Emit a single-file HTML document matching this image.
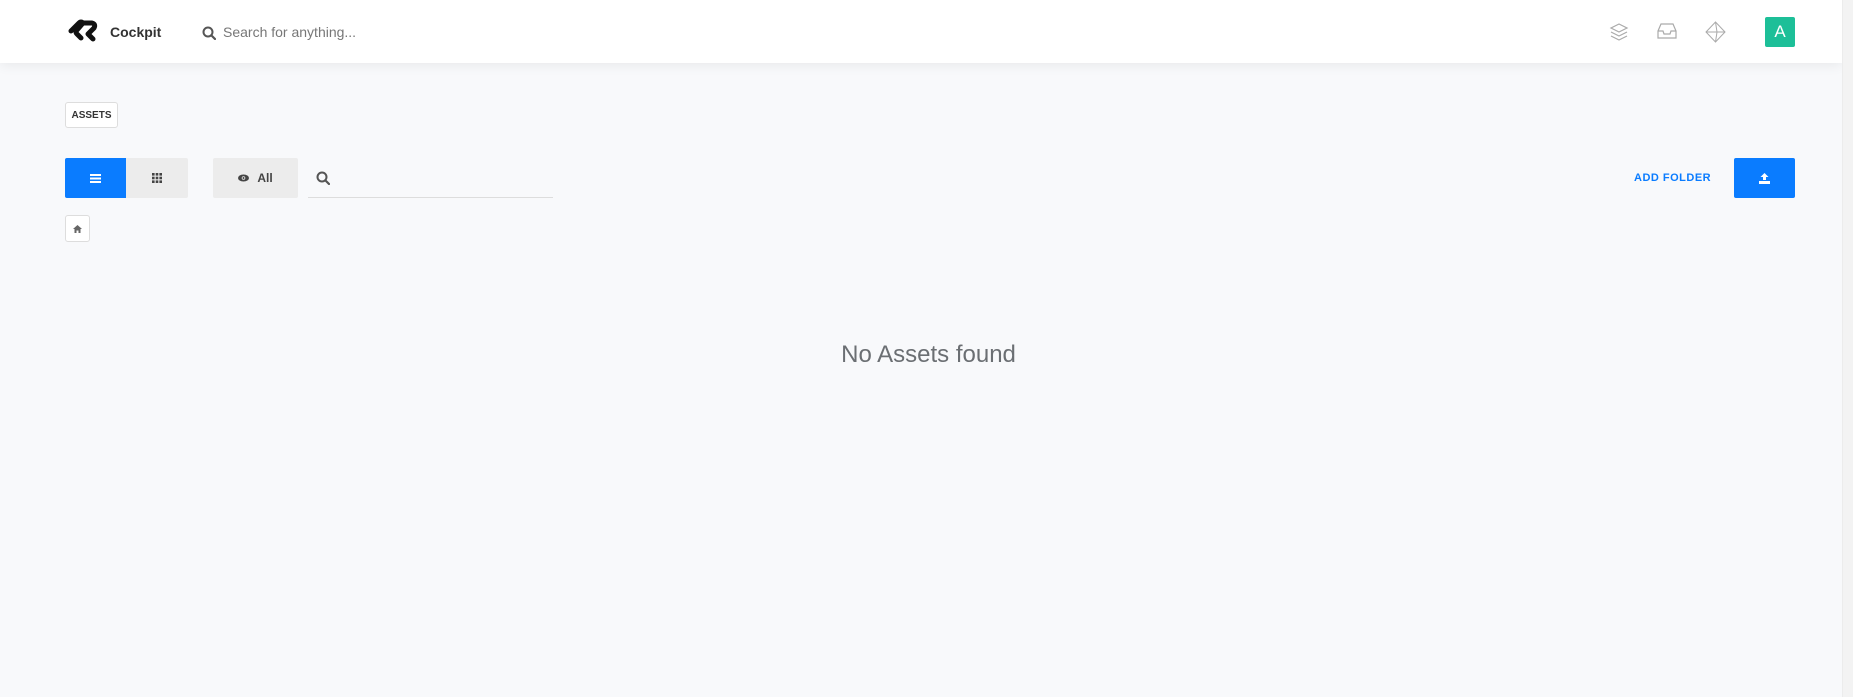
<!DOCTYPE html>
<html><head><meta charset="utf-8"><style>
*{box-sizing:border-box;margin:0;padding:0}
body{width:1853px;height:697px;overflow:hidden;background:#f8f9fb;font-family:"Liberation Sans",sans-serif;position:relative}
.hdr{position:absolute;left:0;top:0;width:1842px;height:63px;background:#fff;box-shadow:0 2px 12px rgba(0,0,0,.07)}
.sb{position:absolute;right:0;top:0;width:11px;height:697px;background:#f3f3f3;border-left:1px solid #ececec}
.abs{position:absolute}
.btn{position:absolute;top:158px;height:40px;display:flex;align-items:center;justify-content:center}
</style></head><body>
<div class="hdr">
 <svg class="abs" style="left:67px;top:19px" width="32" height="24" viewBox="0 0 32 24"><path d="M4 12 L12 4 Q14 2 16 4 L10 11 Q8 13 10 15 L14 19 M15 4 L25 4 Q29 5 27 9 L21 15 L26 20" fill="none" stroke="#111" stroke-width="5" stroke-linecap="round" stroke-linejoin="round"/></svg>
 <div class="abs" style="left:110px;top:24px;font-size:14px;font-weight:bold;color:#333">Cockpit</div>
 <svg class="abs" style="left:202px;top:26px" width="14" height="14" viewBox="0 0 14 14"><circle cx="6" cy="6" r="4.5" fill="none" stroke="#555" stroke-width="2"/><path d="M9.5 9.5 L13 13" stroke="#555" stroke-width="2.2" stroke-linecap="round"/></svg>
 <div class="abs" style="left:223px;top:24px;font-size:14px;color:#777">Search for anything...</div>
 <svg class="abs" style="left:1609px;top:22px" width="20" height="20" viewBox="0 0 20 20" fill="none" stroke="#aaa" stroke-width="1.2"><path d="M10 2 L18 6 L10 10 L2 6 Z M2 10 L10 14 L18 10 M2 14 L10 18 L18 14"/></svg>
 <svg class="abs" style="left:1657px;top:22px" width="20" height="18" viewBox="0 0 20 18" fill="none" stroke="#aaa" stroke-width="1.2"><path d="M4 2 H16 L19 9 V16 H1 V9 Z M1 9 H6 L7 12 H13 L14 9 H19"/></svg>
 <svg class="abs" style="left:1705px;top:21px" width="21" height="22" viewBox="0 0 21 22" fill="none" stroke="#aaa" stroke-width="1"><path d="M10.5 1 L20 11 L10.5 21 L1 11 Z M10.5 1 L12 11 L10.5 21 M1 11 L12 11 L20 11"/></svg>
 <div class="abs" style="left:1765px;top:17px;width:30px;height:30px;background:#1dbf98;border-radius:2px;color:#fff;font-size:17px;display:flex;align-items:center;justify-content:center">A</div>
</div>
<div class="sb"></div>
<div class="abs" style="left:65px;top:102px;width:53px;height:26px;border:1px solid #ddd;border-radius:3px;background:#fff;font-size:10px;font-weight:bold;color:#333;display:flex;align-items:center;justify-content:center">ASSETS</div>
<div class="btn" style="left:65px;width:61px;background:#0a7cff;border-radius:2px 0 0 2px"><svg width="11" height="9" viewBox="0 0 11 9" fill="#fff"><rect x="0" y="0" width="11" height="2"/><rect x="0" y="3.5" width="11" height="2"/><rect x="0" y="7" width="11" height="2"/></svg></div>
<div class="btn" style="left:126px;width:62px;background:#ececec;border-radius:0 2px 2px 0"><svg width="10" height="10" viewBox="0 0 10 10" fill="#444"><rect x="0" y="0" width="2.6" height="2.6"/><rect x="3.7" y="0" width="2.6" height="2.6"/><rect x="7.4" y="0" width="2.6" height="2.6"/><rect x="0" y="3.7" width="2.6" height="2.6"/><rect x="3.7" y="3.7" width="2.6" height="2.6"/><rect x="7.4" y="3.7" width="2.6" height="2.6"/><rect x="0" y="7.4" width="2.6" height="2.6"/><rect x="3.7" y="7.4" width="2.6" height="2.6"/><rect x="7.4" y="7.4" width="2.6" height="2.6"/></svg></div>
<div class="btn" style="left:213px;width:85px;background:#ececec;border-radius:2px;font-size:12px;font-weight:bold;color:#444"><svg width="11" height="8" viewBox="0 0 11 8" style="margin-right:8px"><ellipse cx="5.5" cy="4" rx="5.5" ry="3.5" fill="#444"/><circle cx="5.5" cy="4" r="1.8" fill="#ececec"/><circle cx="5.5" cy="4" r="1" fill="#444"/></svg>All</div>
<div class="abs" style="left:308px;top:158px;width:245px;height:40px;border-bottom:1px solid #ddd"></div>
<svg class="abs" style="left:316px;top:171px" width="14" height="14" viewBox="0 0 14 14"><circle cx="6" cy="6" r="4.5" fill="none" stroke="#555" stroke-width="2"/><path d="M9.5 9.5 L13 13" stroke="#555" stroke-width="2.2" stroke-linecap="round"/></svg>
<div class="abs" style="left:1634px;top:172px;font-size:11px;font-weight:bold;color:#0a7cff;letter-spacing:.5px">ADD FOLDER</div>
<div class="btn" style="left:1734px;width:61px;background:#0a7cff;border-radius:2px"><svg width="11" height="11" viewBox="0 0 11 11" fill="#fff"><path d="M5.5 0 L9.5 4 H7 V7 H4 V4 H1.5 Z"/><rect x="0" y="8" width="11" height="3"/></svg></div>
<div class="abs" style="left:65px;top:215px;width:25px;height:27px;border:1px solid #ddd;border-radius:3px;background:#fff;display:flex;align-items:center;justify-content:center"><svg width="9" height="8" viewBox="0 0 9 8" fill="#666"><path d="M4.5 0 L9 4 H7.5 V8 H5.5 V5.5 H3.5 V8 H1.5 V4 H0 Z"/></svg></div>
<div class="abs" style="left:0;width:1842px;top:341px;text-align:center;font-size:24px;color:#6b6f73;padding-left:15px">No Assets found</div>
</body></html>
